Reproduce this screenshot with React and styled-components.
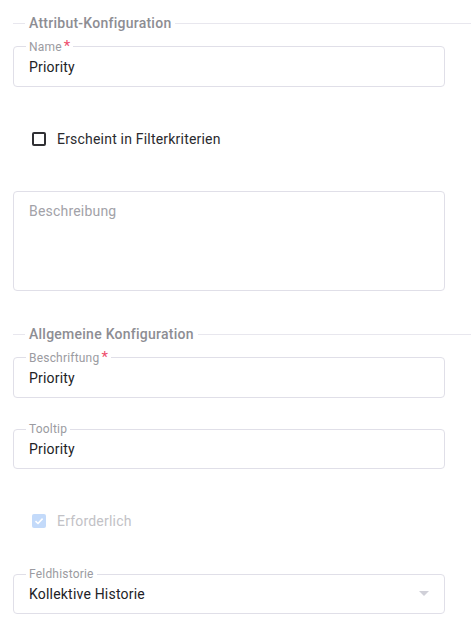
import React from "react";
import styled, { createGlobalStyle } from "styled-components";

const Global = createGlobalStyle`
  html, body { margin: 0; padding: 0; background: #fff; }
  body { font-family: Roboto, "Noto Sans", "Liberation Sans", sans-serif; -webkit-font-smoothing: antialiased; }
  * { box-sizing: border-box; }
`;

const Page = styled.div`
  width: 471px;
  padding: 13px 0 0 13px;
  display: flex;
  flex-direction: column;
`;

const SectionHeader = styled.div`
  display: flex;
  align-items: center;
  gap: 4px;
  height: 20px;
  margin-top: ${(p) => p.$mt || 0}px;
  font-size: 14px;
  font-weight: 500;
  letter-spacing: 0.25px;
  color: #8d8d93;
  &::before {
    content: "";
    width: 12px;
    height: 1px;
    background: #e8e7ee;
  }
  &::after {
    content: "";
    flex: 1;
    height: 1px;
    background: #e8e7ee;
  }
`;

const Field = styled.fieldset`
  width: 432px;
  margin: ${(p) => p.$mt || 0}px 0 0 0;
  padding: 0 15px;
  border: 1px solid #e0dfe8;
  border-radius: 4px;
  min-width: 0;
`;

const Legend = styled.legend`
  padding: 0 3px;
  margin-left: -3px;
  font-size: 12px;
  line-height: 14px;
  letter-spacing: 0.2px;
  color: #9b9ba1;
`;

const Req = styled.span`
  color: #ee4d6c;
  font-size: 15px;
  margin-left: 2px;
  position: relative;
  top: 0px;
`;

const Value = styled.div`
  padding: 3px 0 9px;
  height: 32px;
  font-size: 14px;
  line-height: 20px;
  letter-spacing: 0.2px;
  color: #222226;
  display: flex;
  align-items: flex-start;
  justify-content: space-between;
`;

const Caret = styled.span`
  width: 0;
  height: 0;
  border-left: 5px solid transparent;
  border-right: 5px solid transparent;
  border-top: 5px solid #d0d0d8;
  margin-top: 7px;
`;

const TextArea = styled.div`
  width: 432px;
  height: 100px;
  margin-top: ${(p) => p.$mt || 0}px;
  border: 1px solid #e0dfe8;
  border-radius: 4px;
  padding: 9px 15px;
  font-size: 14px;
  line-height: 20px;
  letter-spacing: 0.2px;
  color: #a2a2a8;
`;

const CheckRow = styled.label`
  display: flex;
  align-items: center;
  gap: 11px;
  height: 20px;
  margin-top: ${(p) => p.$mt || 0}px;
  padding-left: 19px;
  font-size: 14px;
  letter-spacing: 0.2px;
  color: ${(p) => (p.$disabled ? "#c2c2c6" : "#2a2a2e")};
`;

const Box = styled.span`
  width: 14px;
  height: 14px;
  border-radius: 2px;
  border: ${(p) => (p.$checked ? "none" : "2px solid #303034")};
  background: ${(p) => (p.$checked ? "#c3dafa" : "#fff")};
  display: flex;
  align-items: center;
  justify-content: center;
`;

function Check({ checked, disabled, children, mt }) {
  return (
    <CheckRow $disabled={disabled} $mt={mt}>
      <Box $checked={checked}>
        {checked && (
          <svg width="10" height="10" viewBox="0 0 10 10">
            <path d="M1.5 5.2 L4 7.5 L8.6 2.6" fill="none" stroke="#fff" strokeWidth="1.6" />
          </svg>
        )}
      </Box>
      {children}
    </CheckRow>
  );
}

function OutlinedField({ label, required, value, mt, select }) {
  return (
    <Field $mt={mt}>
      <Legend>
        {label}
        {required && <Req>*</Req>}
      </Legend>
      <Value>
        <span>{value}</span>
        {select && <Caret />}
      </Value>
    </Field>
  );
}

export default function App() {
  return (
    <>
      <Global />
      <Page>
        <SectionHeader>Attribut-Konfiguration</SectionHeader>
        <OutlinedField mt={6} label="Name" required value="Priority" />
        <Check mt={42}>Erscheint in Filterkriterien</Check>
        <TextArea $mt={42}>Beschreibung</TextArea>
        <SectionHeader $mt={33}>Allgemeine Konfiguration</SectionHeader>
        <OutlinedField mt={6} label="Beschriftung" required value="Priority" />
        <OutlinedField mt={24} label="Tooltip" value="Priority" />
        <Check mt={42} checked disabled>Erforderlich</Check>
        <OutlinedField mt={36} label="Feldhistorie" value="Kollektive Historie" select />
      </Page>
    </>
  );
}
